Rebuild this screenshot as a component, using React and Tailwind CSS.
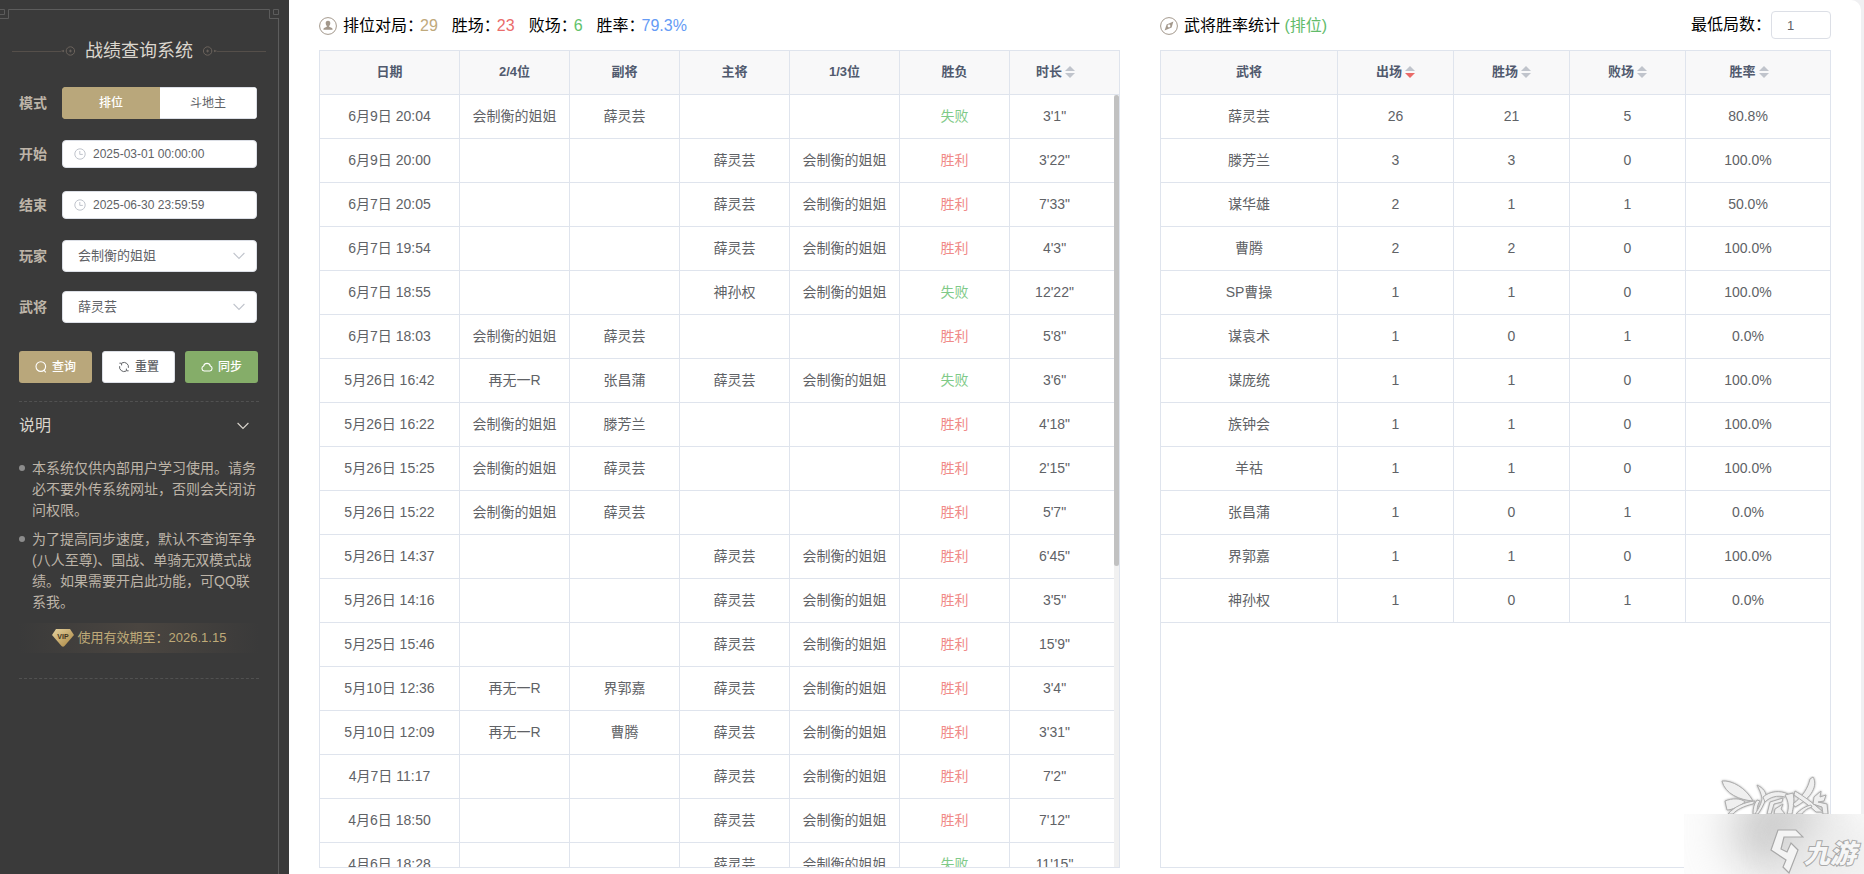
import React, { useState } from 'react';

const ME = '会制衡的姐姐';

const matches = [
  ['6月9日 20:04', ME, '薛灵芸', '', '', false, `3'1"`],
  ['6月9日 20:00', '', '', '薛灵芸', ME, true, `3'22"`],
  ['6月7日 20:05', '', '', '薛灵芸', ME, true, `7'33"`],
  ['6月7日 19:54', '', '', '薛灵芸', ME, true, `4'3"`],
  ['6月7日 18:55', '', '', '神孙权', ME, false, `12'22"`],
  ['6月7日 18:03', ME, '薛灵芸', '', '', true, `5'8"`],
  ['5月26日 16:42', '再无一R', '张昌蒲', '薛灵芸', ME, false, `3'6"`],
  ['5月26日 16:22', ME, '滕芳兰', '', '', true, `4'18"`],
  ['5月26日 15:25', ME, '薛灵芸', '', '', true, `2'15"`],
  ['5月26日 15:22', ME, '薛灵芸', '', '', true, `5'7"`],
  ['5月26日 14:37', '', '', '薛灵芸', ME, true, `6'45"`],
  ['5月26日 14:16', '', '', '薛灵芸', ME, true, `3'5"`],
  ['5月25日 15:46', '', '', '薛灵芸', ME, true, `15'9"`],
  ['5月10日 12:36', '再无一R', '界郭嘉', '薛灵芸', ME, true, `3'4"`],
  ['5月10日 12:09', '再无一R', '曹腾', '薛灵芸', ME, true, `3'31"`],
  ['4月7日 11:17', '', '', '薛灵芸', ME, true, `7'2"`],
  ['4月6日 18:50', '', '', '薛灵芸', ME, true, `7'12"`],
  ['4月6日 18:28', '', '', '薛灵芸', ME, false, `11'15"`],
];

const generals = [
  ['薛灵芸', 26, 21, 5, '80.8%'],
  ['滕芳兰', 3, 3, 0, '100.0%'],
  ['谋华雄', 2, 1, 1, '50.0%'],
  ['曹腾', 2, 2, 0, '100.0%'],
  ['SP曹操', 1, 1, 0, '100.0%'],
  ['谋袁术', 1, 0, 1, '0.0%'],
  ['谋庞统', 1, 1, 0, '100.0%'],
  ['族钟会', 1, 1, 0, '100.0%'],
  ['羊祜', 1, 1, 0, '100.0%'],
  ['张昌蒲', 1, 0, 1, '0.0%'],
  ['界郭嘉', 1, 1, 0, '100.0%'],
  ['神孙权', 1, 0, 1, '0.0%'],
];

const thClass =
  'sticky top-0 h-11 border-b border-r border-[#dfe4ed] bg-[#f8f8f9] pb-0.5 text-center text-[13px] font-bold text-[#515a6e] last:border-r-0';
const tdClass =
  'h-11 border-b border-r border-[#dfe4ed] pb-0.5 text-center text-sm text-[#606266] last:border-r-0';

const Chevron = ({ className }) => (
  <svg viewBox="0 0 12 8" className={className} fill="none" stroke="currentColor" strokeWidth="1.1">
    <path d="M0.6 1 L6 6.4 L11.4 1" />
  </svg>
);

const ClockIcon = () => (
  <svg viewBox="0 0 12 12" className="h-3 w-3 shrink-0 text-[#c0c4cc]" fill="none" stroke="currentColor">
    <circle cx="6" cy="6" r="5.2" />
    <path d="M5.8 3 V6.4 H8.8" />
  </svg>
);

const SearchIcon = () => (
  <svg viewBox="0 0 12 12" className="h-3 w-3" fill="none" stroke="currentColor" strokeWidth="1.1">
    <circle cx="5.8" cy="5.6" r="4.8" />
    <path d="M8.8 9.2 L10.8 11.4" />
  </svg>
);

const RefreshIcon = () => (
  <svg viewBox="0 0 12 12" className="h-3 w-3" fill="none" stroke="currentColor" strokeWidth="1">
    <path d="M4 1.9 A4.5 4.5 0 0 1 10.4 6.8 M1.6 5.2 A4.5 4.5 0 0 0 8 10.1" />
    <path d="M1.4 2.2 H3.6 V4.4 M10.6 9.8 H8.4 V7.6" />
  </svg>
);

const CloudIcon = () => (
  <svg viewBox="0 0 12 12" className="h-3 w-3" fill="none" stroke="currentColor" strokeWidth="1.1">
    <path d="M3.2 10 A2.6 2.6 0 0 1 2.6 5 A3.5 3.5 0 0 1 9.4 5 A2.6 2.6 0 0 1 8.8 10 Z" />
  </svg>
);

const PlayerIcon = () => (
  <svg viewBox="0 0 18 18" className="h-[18px] w-[18px]">
    <circle cx="9" cy="9" r="8.4" fill="none" stroke="#a3988c" />
    <path
      d="M9 3.8 C10.7 3.8 11.4 5 11.3 6.4 C11.2 7.6 10.7 8.4 10.2 8.9 V9.7 L13 11 C13.5 11.3 13.6 11.9 13.6 12.8 H4.4 C4.4 11.9 4.5 11.3 5 11 L7.8 9.7 V8.9 C7.3 8.4 6.8 7.6 6.7 6.4 C6.6 5 7.3 3.8 9 3.8 Z"
      fill="#a3988c"
    />
  </svg>
);

const CompassIcon = () => (
  <svg viewBox="0 0 18 18" className="h-[18px] w-[18px]">
    <circle cx="9" cy="9" r="8.4" fill="none" stroke="#a3988c" />
    <path d="M13.4 4.4 L11.6 10.4 L4.6 13.6 L6.6 7.4 Z" fill="#a3988c" />
    <circle cx="9" cy="9" r="1.4" fill="#fff" />
  </svg>
);

const SortIcon = ({ desc }) => (
  <svg viewBox="0 0 10 12" className="h-3 w-2.5" aria-hidden="true">
    <path d="M5 0 L10 5 H0 Z" fill="#c0c4cc" />
    <path d="M5 12 L10 7 H0 Z" fill={desc ? '#ea6a68' : '#c0c4cc'} />
  </svg>
);

const TitleRule = ({ flip }) => (
  <div className={`flex flex-1 items-center ${flip ? 'flex-row-reverse' : ''}`}>
    <span className="h-px flex-1 bg-[#554f4a]" />
    <svg viewBox="0 0 14 10" className={`h-2.5 w-3.5 ${flip ? '-scale-x-100' : ''}`} fill="none" stroke="#6b635c">
      <path d="M0 5 H1.5" stroke="#554f4a" />
      <path d="M1 5 L2.2 3.8 L3.4 5 L2.2 6.2 Z" fill="#6b635c" stroke="none" />
      <circle cx="9.4" cy="5" r="4.2" />
      <path d="M8 5 H10.8 M9.4 3.6 V6.4" />
    </svg>
  </div>
);

const SidebarFrame = () => (
  <div className="pointer-events-none absolute bottom-0 left-0 right-[10px] top-[9px]">
    <div className="flex">
      <svg viewBox="0 0 9 10" className="h-2.5 w-[9px]" fill="none" stroke="#5c5c5c">
        <path d="M0 0.5 H4.5 V5.5 H0" />
        <path d="M9 0.5 H8.5 V9.5 H0" />
      </svg>
      <span className="h-px flex-1 bg-[#5c5c5c]" />
      <svg viewBox="0 0 10 10" className="h-2.5 w-2.5" fill="none" stroke="#5c5c5c">
        <path d="M4.5 0.5 H9.5 V5.5 H4.5 Z" />
        <path d="M0 0.5 H0.5 V9.5 H10" />
      </svg>
    </div>
    <div className="h-full border-r border-[#5c5c5c]" />
  </div>
);

const Field = ({ label, htmlFor, children }) => (
  <div className="flex h-8 items-center">
    <label htmlFor={htmlFor} className="w-[43px] shrink-0 text-sm font-bold text-[#bdb4a8]">
      {label}
    </label>
    {children}
  </div>
);

const DateField = ({ id, label, defaultValue }) => (
  <Field label={label} htmlFor={id}>
    <div className="flex h-7 flex-1 items-center gap-[7px] rounded border border-[#dcdfe6] bg-white pl-[11px]">
      <ClockIcon />
      <input
        id={id}
        type="text"
        defaultValue={defaultValue}
        className="w-full min-w-0 bg-transparent text-xs text-[#606266] outline-none"
      />
    </div>
  </Field>
);

const SelectField = ({ id, label, options }) => (
  <Field label={label} htmlFor={id}>
    <div className="relative h-8 flex-1">
      <select
        id={id}
        className="h-8 w-full appearance-none rounded border border-[#dcdfe6] bg-white px-[15px] text-[13px] text-[#606266] outline-none">
        {options.map(option => (
          <option key={option}>{option}</option>
        ))}
      </select>
      <Chevron className="pointer-events-none absolute right-3 top-3 h-2 w-3 text-[#c0c4cc]" />
    </div>
  </Field>
);

const Sidebar = () => {
  const [mode, setMode] = useState('排位');
  const [open, setOpen] = useState(true);

  return (
    <aside className="relative w-[289px] shrink-0 overflow-hidden bg-[#3a3a3a] pt-8">
      <SidebarFrame />

      <div className="flex h-9 items-center gap-2.5 pl-3 pr-[23px] pt-0.5">
        <TitleRule />
        <h1 className="text-lg text-[#dbd6ce]">战绩查询系统</h1>
        <TitleRule flip />
      </div>

      <div className="pl-[19px] pr-[30px] pt-[19px]">
        <form className="flex flex-col gap-[19px] pr-0.5" onSubmit={e => e.preventDefault()}>
          <Field label="模式">
            <div className="flex h-8 flex-1 overflow-hidden rounded">
              {['排位', '斗地主'].map(item => (
                <label
                  key={item}
                  className={`flex flex-1 items-center justify-center border text-xs ${
                    mode === item
                      ? 'border-[#b9a77b] bg-[#b9a77b] font-medium text-white'
                      : 'border-[#dcdfe6] bg-white text-[#606266] first:border-r-0 last:border-l-0'
                  }`}>
                  <input
                    type="radio"
                    name="mode"
                    className="sr-only"
                    checked={mode === item}
                    onChange={() => setMode(item)}
                  />
                  {item}
                </label>
              ))}
            </div>
          </Field>
          <DateField id="start" label="开始" defaultValue="2025-03-01 00:00:00" />
          <DateField id="end" label="结束" defaultValue="2025-06-30 23:59:59" />
          <SelectField id="player" label="玩家" options={[ME, '再无一R']} />
          <SelectField id="general" label="武将" options={generals.map(row => row[0])} />
        </form>

        <div className="mt-7 grid grid-cols-3 gap-2.5 pr-px text-xs">
          <button type="button" className="flex h-8 items-center justify-center gap-[5px] rounded-[3px] bg-[#b9a77b] font-medium text-white">
            <SearchIcon />
            查询
          </button>
          <button type="button" className="flex h-8 items-center justify-center gap-[5px] rounded-[3px] border border-[#dcdfe6] bg-white font-medium text-[#606266]">
            <RefreshIcon />
            重置
          </button>
          <button type="button" className="flex h-8 items-center justify-center gap-[5px] rounded-[3px] bg-[#85ad69] font-medium text-white">
            <CloudIcon />
            同步
          </button>
        </div>

        <section className="mt-[18px] border-y border-dashed border-[#515151] pb-[25px]">
          <button
            type="button"
            onClick={() => setOpen(!open)}
            className="flex h-12 w-full items-center justify-between pr-2.5 text-base text-[#dbd6ce]">
            说明
            <Chevron className="h-2 w-3" />
          </button>
          {open && (
            <ul className="mt-2 space-y-2 text-sm leading-[21px] text-[#bdb4a8]">
              <li className="flex gap-[7px]">
                <span className="mt-[7px] h-1.5 w-1.5 shrink-0 rounded-full bg-[#8c8c8c]" />
                <p>本系统仅供内部用户学习使用。请务必不要外传系统网址，否则会关闭访问权限。</p>
              </li>
              <li className="flex gap-[7px]">
                <span className="mt-[7px] h-1.5 w-1.5 shrink-0 rounded-full bg-[#8c8c8c]" />
                <p>为了提高同步速度，默认不查询军争(八人至尊)、国战、单骑无双模式战绩。如果需要开启此功能，可QQ联系我。</p>
              </li>
            </ul>
          )}
          <div className="mt-2.5 flex h-[30px] items-center justify-center gap-1 bg-linear-to-r from-transparent via-[#4a4540] to-transparent text-[13px] text-[#bfaa78]">
            <svg viewBox="0 0 22 18" className="h-[18px] w-[22px]">
              <defs>
                <linearGradient id="vip" x1="0" y1="0" x2="1" y2="1">
                  <stop offset="0" stopColor="#e6d3a0" />
                  <stop offset="1" stopColor="#a8843f" />
                </linearGradient>
              </defs>
              <path d="M4 0 H18 L22 6 L12.5 17 Q11 18.6 9.5 17 L0 6 Z" fill="url(#vip)" />
              <text x="11" y="10.4" textAnchor="middle" fontSize="7" fontWeight="700" fill="#3f3420">
                VIP
              </text>
            </svg>
            使用有效期至：2026.1.15
          </div>
        </section>
      </div>
    </aside>
  );
};

const SortHead = ({ label, desc }) => (
  <button type="button" className="inline-flex items-center gap-[3px] font-bold">
    {label}
    <SortIcon desc={desc} />
  </button>
);

const MatchTable = () => (
  <div className="relative min-h-0 flex-1 border border-[#dfe4ed]">
    <div className="h-full overflow-y-auto [scrollbar-width:none]">
      <table className="w-full table-fixed border-separate border-spacing-0">
        <colgroup>
          <col className="w-[140px]" />
          <col className="w-[110px]" />
          <col className="w-[110px]" />
          <col className="w-[110px]" />
          <col className="w-[110px]" />
          <col className="w-[110px]" />
          <col className="w-[109px]" />
        </colgroup>
        <thead>
          <tr>
            {['日期', '2/4位', '副将', '主将', '1/3位', '胜负'].map(name => (
              <th key={name} className={thClass}>
                {name}
              </th>
            ))}
            <th className={`${thClass} pr-[18px]`}>
              <SortHead label="时长" />
            </th>
          </tr>
        </thead>
        <tbody>
          {matches.map(([date, seat24, vice, main, seat13, win, time]) => (
            <tr key={date}>
              <td className={tdClass}>{date}</td>
              <td className={tdClass}>{seat24}</td>
              <td className={tdClass}>{vice}</td>
              <td className={tdClass}>{main}</td>
              <td className={tdClass}>{seat13}</td>
              <td className={tdClass}>
                <span className={win ? 'text-[#f08a88]' : 'text-[#7fca88]'}>{win ? '胜利' : '失败'}</span>
              </td>
              <td className={`${tdClass} pr-5`}>{time}</td>
            </tr>
          ))}
        </tbody>
      </table>
    </div>
    <div className="absolute bottom-0 right-0 top-11 w-[5px] bg-[#f1f1f1]">
      <div className="h-[61%] rounded-[3px] bg-[#c1c1c1]" />
    </div>
  </div>
);

const GeneralTable = () => (
  <div className="min-h-0 flex-1 overflow-y-auto border border-[#dfe4ed] [scrollbar-width:none]">
    <table className="w-full table-fixed border-separate border-spacing-0">
      <colgroup>
        <col className="w-[177px]" />
        <col className="w-[116px]" />
        <col className="w-[116px]" />
        <col className="w-[116px]" />
        <col className="w-[144px]" />
      </colgroup>
      <thead>
        <tr>
          <th className={thClass}>武将</th>
          <th className={thClass}>
            <SortHead label="出场" desc />
          </th>
          <th className={thClass}>
            <SortHead label="胜场" />
          </th>
          <th className={thClass}>
            <SortHead label="败场" />
          </th>
          <th className={`${thClass} pr-[18px]`}>
            <SortHead label="胜率" />
          </th>
        </tr>
      </thead>
      <tbody>
        {generals.map(([name, played, won, lost, rate]) => (
          <tr key={name}>
            <td className={tdClass}>{name}</td>
            <td className={tdClass}>{played}</td>
            <td className={tdClass}>{won}</td>
            <td className={tdClass}>{lost}</td>
            <td className={`${tdClass} pr-5`}>{rate}</td>
          </tr>
        ))}
      </tbody>
    </table>
  </div>
);

const Watermark = () => (
  <div className="pointer-events-none absolute bottom-0 right-0 w-[180px]">
    <svg viewBox="0 0 180 38" className="h-[38px] w-full" fill="#efefef" stroke="#adadad" strokeWidth="1">
      <g style={{ filter: 'drop-shadow(0 0 1px #aaa)' }}>
        <path d="M38 5 C48 4 62 12 69 25 C56 24 41 18 38 5 Z" />
        <path d="M41 25 C48 22 57 22 61 26 C56 30 48 34 43 34 Z" />
        <path d="M44 38 C50 31 60 26 71 25 L69 28 C60 30 52 34 49 38 Z" />
        <path d="M69 38 C69 32 70 28 73 24 L76 25 C73 29 73 34 73 38 Z" />
        <path d="M73 9 C79 12 83 16 82 23 C79 30 77 34 74 38 L71 38 C75 32 78 26 78 22 C77 17 75 13 73 9 Z" />
        <path d="M79 21 C86 15 96 14 104 18 L101 21 C93 19 86 21 81 26 Z" />
        <path d="M83 38 L86 26 L99 22 L98 26 L90 28 L87 38 Z" />
        <path d="M91 33 L99 28 L97 33 L101 38 H90 Z" />
        <path d="M101 19 L109 17 C111 25 109 32 108 38 H103 C105 32 105 26 101 19 Z" />
        <path d="M129 1 C134 9 128 22 111 31 L109 28 C119 20 124 12 126 3 Z" />
        <path d="M111 15 C118 19 128 26 139 36 L132 36 C125 29 117 24 110 19 Z" />
        <path d="M112 38 C117 33 122 30 127 29 L128 31 C122 33 120 35 118 38 Z" />
        <path d="M130 21 L137 15 L136 21 L142 19 L140 25 L134 26 L143 28 L144 38 H139 L138 31 L129 28 Z" />
      </g>
    </svg>
    <div className="relative h-[60px] overflow-hidden bg-[#fcfcfc]">
      <div className="absolute -top-6 left-12 h-20 w-24 rounded-full bg-[#c6c6c6] blur-xl" />
      <div className="absolute -right-8 top-3 h-16 w-28 rounded-full bg-[#ececec] blur-xl" />
      <div className="relative flex h-full items-end justify-end pr-2">
        <svg viewBox="0 0 34 46" className="h-[46px] w-[34px]" fill="#f4f4f4" stroke="#a8a8a8" strokeWidth="1.2">
          <path d="M8 2 H26 L33 9 H14 L11 21 L17 24 L21 15 L28 22 L19 45 L13 39 L16 32 L1 22 Z" />
        </svg>
        <span className="pb-0.5 text-[26px] font-black italic leading-9 text-[#f6f6f6] [-webkit-text-stroke:2px_#a8a8a8] [paint-order:stroke]">
          九游
        </span>
      </div>
    </div>
  </div>
);

const stats = [
  { label: '排位对局：', value: '29', color: 'text-[#bfa97c]' },
  { label: '胜场：', value: '23', color: 'text-[#ea6c6b]' },
  { label: '败场：', value: '6', color: 'text-[#62c26c]' },
  { label: '胜率：', value: '79.3%', color: 'text-[#659bf5]' },
];

const App = () => (
  <div className="relative flex h-screen overflow-hidden bg-[#f0f0f2] pr-[3px] font-['Liberation_Sans','Noto_Sans_CJK_SC',sans-serif] [text-spacing-trim:space-all]">
    <Sidebar />
    <main className="grid min-w-0 flex-1 grid-cols-[801fr_671fr] gap-10 rounded-tr-[10px] bg-white px-[30px] pb-1.5">
      <section className="flex min-h-0 min-w-0 flex-col">
        <header className="flex h-[50px] items-center gap-1.5 pt-0.5">
          <PlayerIcon />
          <div className="flex gap-3.5 text-base text-black">
            {stats.map(({ label, value, color }) => (
              <p key={label}>
                <span className="-mr-[3px]">{label}</span>
                <span className={color}>{value}</span>
              </p>
            ))}
          </div>
        </header>
        <MatchTable />
      </section>

      <section className="flex min-h-0 min-w-0 flex-col">
        <header className="flex h-[50px] items-center gap-1.5 pt-0.5">
          <CompassIcon />
          <h2 className="flex-1 text-base text-black">
            武将胜率统计 <span className="text-[#62bb6a]">(排位)</span>
          </h2>
          <div className="flex items-center pb-0.5">
            <label htmlFor="min-games" className="text-base text-black">
              最低局数：
            </label>
            <input
              id="min-games"
              type="text"
              defaultValue="1"
              className="h-7 w-[60px] rounded border border-[#dcdfe6] bg-white px-[15px] text-[13px] text-[#606266] outline-none"
            />
          </div>
        </header>
        <GeneralTable />
      </section>
    </main>
    <Watermark />
  </div>
);

export default App;
